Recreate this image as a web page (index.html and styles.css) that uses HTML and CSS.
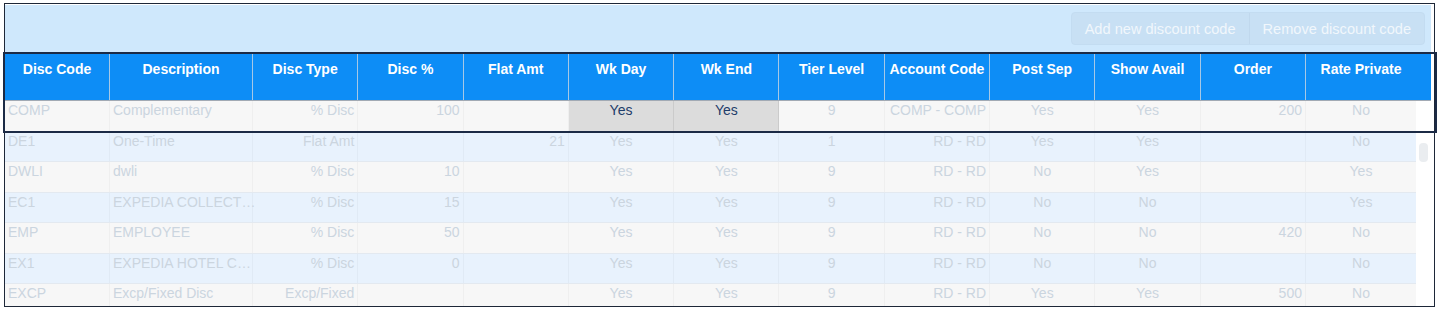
FILE: index.html
```html
<!DOCTYPE html>
<html>
<head>
<meta charset="utf-8">
<link rel="stylesheet" href="styles.css">
</head>
<body>
<div class="frame">
  <div class="toolbar">
    <div class="btn-group">
      <button class="btn">Add new discount code</button>
      <button class="btn">Remove discount code</button>
    </div>
  </div>
  <div class="head-row">
    <div class="hc">Disc Code</div>
    <div class="hc">Description</div>
    <div class="hc">Disc Type</div>
    <div class="hc">Disc %</div>
    <div class="hc">Flat Amt</div>
    <div class="hc">Wk Day</div>
    <div class="hc">Wk End</div>
    <div class="hc">Tier Level</div>
    <div class="hc">Account Code</div>
    <div class="hc">Post Sep</div>
    <div class="hc">Show Avail</div>
    <div class="hc">Order</div>
    <div class="hc last">Rate Private</div>
  </div>
  <div class="body">
    <div class="rows">
      <div class="row odd">
        <div class="c l">COMP</div><div class="c l">Complementary</div><div class="c r">% Disc</div><div class="c r">100</div><div class="c r"></div><div class="c m sel">Yes</div><div class="c m sel">Yes</div><div class="c m">9</div><div class="c r">COMP - COMP</div><div class="c m">Yes</div><div class="c m">Yes</div><div class="c r">200</div><div class="c m last">No</div>
      </div>
      <div class="row even">
        <div class="c l">DE1</div><div class="c l">One-Time</div><div class="c r">Flat Amt</div><div class="c r"></div><div class="c r">21</div><div class="c m">Yes</div><div class="c m">Yes</div><div class="c m">1</div><div class="c r">RD - RD</div><div class="c m">Yes</div><div class="c m">Yes</div><div class="c r"></div><div class="c m last">No</div>
      </div>
      <div class="row odd">
        <div class="c l">DWLI</div><div class="c l">dwli</div><div class="c r">% Disc</div><div class="c r">10</div><div class="c r"></div><div class="c m">Yes</div><div class="c m">Yes</div><div class="c m">9</div><div class="c r">RD - RD</div><div class="c m">No</div><div class="c m">Yes</div><div class="c r"></div><div class="c m last">Yes</div>
      </div>
      <div class="row even">
        <div class="c l">EC1</div><div class="c l desc">EXPEDIA COLLECT…</div><div class="c r">% Disc</div><div class="c r">15</div><div class="c r"></div><div class="c m">Yes</div><div class="c m">Yes</div><div class="c m">9</div><div class="c r">RD - RD</div><div class="c m">No</div><div class="c m">No</div><div class="c r"></div><div class="c m last">Yes</div>
      </div>
      <div class="row odd">
        <div class="c l">EMP</div><div class="c l">EMPLOYEE</div><div class="c r">% Disc</div><div class="c r">50</div><div class="c r"></div><div class="c m">Yes</div><div class="c m">Yes</div><div class="c m">9</div><div class="c r">RD - RD</div><div class="c m">No</div><div class="c m">No</div><div class="c r">420</div><div class="c m last">No</div>
      </div>
      <div class="row even">
        <div class="c l">EX1</div><div class="c l desc">EXPEDIA HOTEL C…</div><div class="c r">% Disc</div><div class="c r">0</div><div class="c r"></div><div class="c m">Yes</div><div class="c m">Yes</div><div class="c m">9</div><div class="c r">RD - RD</div><div class="c m">No</div><div class="c m">No</div><div class="c r"></div><div class="c m last">No</div>
      </div>
      <div class="row odd">
        <div class="c l">EXCP</div><div class="c l">Excp/Fixed Disc</div><div class="c r">Excp/Fixed</div><div class="c r"></div><div class="c r"></div><div class="c m">Yes</div><div class="c m">Yes</div><div class="c m">9</div><div class="c r">RD - RD</div><div class="c m">Yes</div><div class="c m">Yes</div><div class="c r">500</div><div class="c m last">No</div>
      </div>
    </div>
    <div class="scroll"><div class="thumb"></div></div>
  </div>
</div>
<div class="selection"></div>
</body>
</html>
```
FILE: styles.css
```css
* { box-sizing: border-box; }
html, body { margin: 0; padding: 0; background: #ffffff; }
body {
  width: 1440px;
  height: 311px;
  position: relative;
  overflow: hidden;
  font-family: "Liberation Sans", Arial, sans-serif;
  font-size: 14px;
}
.frame {
  margin: 3px 0 0 4px;
  width: 1431px;
  height: 304px;
  border: 1px solid #1d2738;
  padding: 1px 3px 0 0;
  overflow: hidden;
  background: #ffffff;
}
.toolbar {
  height: 48px;
  background: #cfe8fc;
  display: flex;
  justify-content: flex-end;
  align-items: flex-start;
  padding: 7px 6px 0 0;
}
.btn-group {
  display: flex;
  height: 33px;
  background: #c8e0f4;
  border: 1px solid #c3dcf1;
  border-radius: 4px;
}
.btn {
  font-family: "Liberation Sans", Arial, sans-serif;
  font-size: 14.6px;
  color: #f1f7fc;
  background: transparent;
  border: none;
  padding: 0 13px 0 13px;
  margin: 0;
  height: 31px;
}
.btn + .btn { border-left: 1px solid #c0d8ed; }
.head-row {
  display: grid;
  grid-template-columns: 105px 143px repeat(10, 105.3px) 1fr;
  height: 48px;
  background: #0d8df6;
  border-bottom: 1px solid #a2aab4;
  padding-right: 15px;
}
.hc {
  color: #ffffff;
  font-weight: bold;
  text-align: center;
  line-height: 18px;
  padding-top: 7px;
  border-right: 1px solid #a6c8e6;
  white-space: nowrap;
}
.hc.last { border-right: none; }
.body {
  display: flex;
}
.rows {
  width: 1411px;
}
.scroll {
  flex: 1;
  background: #ffffff;
  padding: 42px 0 0 3px;
}
.thumb {
  width: 9px;
  height: 19px;
  border-radius: 4px;
  background: #eaedf0;
}
.row {
  display: grid;
  grid-template-columns: 105px 143px repeat(10, 105.3px) 1fr;
  height: 30.5px;
  border-bottom: 1px solid #e3e9f0;
}
.row.odd { background: #f7f7f7; }
.row.even { background: #e8f2fd; }
.c {
  color: #cbd5df;
  line-height: 18px;
  padding: 0 3px;
  white-space: nowrap;
  overflow: hidden;
  border-right: 1px solid rgba(0, 0, 0, 0.03);
}
.c.desc { overflow: visible; padding-right: 0; }
.c.last { border-right: none; }
.c.l { text-align: left; }
.c.r { text-align: right; }
.c.m { text-align: center; }
.c.sel {
  background: #dcdcdc;
  color: #1f3d6a;
  border-right: 1px solid #cbcbcb;
}
.selection {
  position: absolute;
  left: 3px;
  top: 52px;
  width: 1434px;
  height: 81px;
  border: 2px solid #1b2a45;
  pointer-events: none;
}
```
